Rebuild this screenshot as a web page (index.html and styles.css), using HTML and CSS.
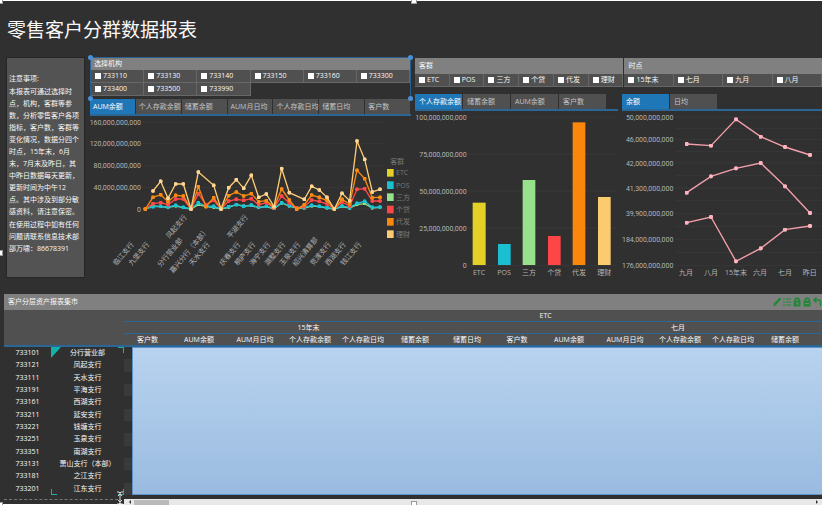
FILE: index.html
```html
<!DOCTYPE html>
<html lang="zh-CN">
<head>
    <meta charset="UTF-8">
    <meta name="viewport" content="width=device-width, initial-scale=1.0">
    <title>零售客户分群数据报表</title>
    <link rel="stylesheet" href="styles.css">
</head>
<body>
    <div class="report">
        <h1>零售客户分群数据报表</h1>

        <div class="dashboard">
            <aside class="notes">
                <p>注意事项:</p>
                <p>本报表可通过选择时<br>点，机构，客群等参<br>数，分析零售客户各项<br>指标，客户数，客群等<br>变化情况，数据分四个<br>时点，15年末，6月<br>末，7月末及昨日，其<br>中昨日数据每天更新，<br>更新时间为中午12<br>点。其中涉及到部分敏<br>感资料，请注意保密。</p>
                <p>在使用过程中如有任何<br>问题请联系信息技术部<br>邵万啸：86678391</p>
            </aside>

            <section class="branch">
                <div class="filter filter-branch">
                    <h2>选择机构</h2>
                    <div class="options options-branch">
                        <label><input type="checkbox">733110</label>
                        <label><input type="checkbox">733130</label>
                        <label><input type="checkbox">733140</label>
                        <label><input type="checkbox">733150</label>
                        <label><input type="checkbox">733160</label>
                        <label><input type="checkbox">733300</label>
                        <label><input type="checkbox">733400</label>
                        <label><input type="checkbox">733500</label>
                        <label><input type="checkbox">733990</label>
                    </div>
                    <i class="dot dot-tl"></i><i class="dot dot-tr"></i><i class="dot dot-bl"></i><i class="dot dot-br"></i>
                </div>
                <div class="tabs tabs-branch">
                    <button class="active">AUM余额</button>
                    <button>个人存款余额</button>
                    <button>储蓄余额</button>
                    <button>AUM月日均</button>
                    <button>个人存款日均</button>
                    <button>储蓄日均</button>
                    <button>客户数</button>
                </div>
                <svg class="chart" viewBox="15 18 963 522">
                    <path class="grid-line" d="M172 36H900M172 101H900M172 166H900M172 232H900M172 297H900"/>
                    <g class="axis-y">
                        <text x="168" y="44">160,000,000,000</text>
                        <text x="168" y="109">120,000,000,000</text>
                        <text x="168" y="174">80,000,000,000</text>
                        <text x="168" y="240">40,000,000,000</text>
                        <text x="168" y="305">0</text>
                    </g>
                    <g class="line green">
                        <polyline points="181,297 204,288 227,290 249,292 272,288 295,293 318,297 340,284 363,290 386,292 408,297 431,292 454,284 476,288 499,287 521,293 544,290 567,296 590,279 613,288 635,294 658,294 680,288 703,290 726,294 748,297 771,290 794,294 816,284 839,281 862,294 885,292"/>
                    </g>
                    <g class="line teal">
                        <polyline points="181,297 204,290 227,289 249,291 272,286 295,292 318,297 340,278 363,288 386,289 408,297 431,290 454,284 476,289 499,285 521,292 544,289 567,295 590,278 613,287 635,293 658,293 680,286 703,289 726,293 748,297 771,288 794,293 816,280 839,274 862,292 885,291"/>
                    </g>
                    <g class="line red">
                        <polyline points="181,297 204,281 227,278 249,284 272,267 295,267 318,297 340,251 363,284 386,271 408,297 431,273 454,268 476,271 499,266 521,284 544,278 567,294 590,258 613,279 635,294 658,290 680,270 703,274 726,282 748,297 771,276 794,288 816,238 839,236 862,273 885,273"/>
                    </g>
                    <g class="line orange">
                        <polyline points="181,297 204,262 227,254 249,275 272,256 295,258 318,297 340,230 363,290 386,263 408,297 431,257 454,246 476,258 499,251 521,275 544,272 567,292 590,237 613,270 635,298 658,284 680,255 703,262 726,272 748,297 771,268 794,282 816,181 839,206 862,263 885,262"/>
                    </g>
                    <g class="line sand">
                        <polyline points="204,243 227,214 249,265 272,222 295,222 318,297 340,186 386,226 408,297 431,233 454,209 476,235 499,196 521,262 544,252 567,290 590,176 613,248 658,268 680,229 703,240 726,262 748,297 771,250 794,272 816,93 839,148 862,246 885,238"/>
                    </g>
                    <g class="axis-branch">
                        <text transform="translate(148 404) rotate(-50)">临江支行</text>
                        <text transform="translate(194 404) rotate(-50)">九堡支行</text>
                        <text transform="translate(307 322) rotate(-50)">凤起支行</text>
                        <text transform="translate(294 392) rotate(-50)">分行营业部</text>
                        <text transform="translate(372 362) rotate(-50)">嘉兴分行（本部）</text>
                        <text transform="translate(376 404) rotate(-50)">天水支行</text>
                        <text transform="translate(490 322) rotate(-50)">平湖支行</text>
                        <text transform="translate(467 404) rotate(-50)">庆春支行</text>
                        <text transform="translate(512 404) rotate(-50)">桐庐支行</text>
                        <text transform="translate(557 404) rotate(-50)">海宁支行</text>
                        <text transform="translate(602 404) rotate(-50)">湖墅支行</text>
                        <text transform="translate(647 404) rotate(-50)">玉泉支行</text>
                        <text transform="translate(700 390) rotate(-50)">绍兴清算部</text>
                        <text transform="translate(739 404) rotate(-50)">竞渡支行</text>
                        <text transform="translate(784 404) rotate(-50)">西湖支行</text>
                        <text transform="translate(830 404) rotate(-50)">钱江支行</text>
                    </g>
                    <g class="legend">
                        <text x="916" y="162">客群</text>
                        <rect class="fill-yellow" x="906" y="177" width="20" height="23"/><text x="933" y="196">ETC</text>
                        <rect class="fill-teal" x="906" y="214" width="20" height="23"/><text x="933" y="233">POS</text>
                        <rect class="fill-green" x="906" y="250" width="20" height="23"/><text x="933" y="269">三方</text>
                        <rect class="fill-red" x="906" y="287" width="20" height="23"/><text x="933" y="306">个贷</text>
                        <rect class="fill-orange" x="906" y="324" width="20" height="23"/><text x="933" y="343">代发</text>
                        <rect class="fill-sand" x="906" y="361" width="20" height="23"/><text x="933" y="380">理财</text>
                    </g>
                </svg>
            </section>

            <section class="right">
                <div class="filters">
                    <div class="filter">
                        <h2>客群</h2>
                        <div class="options options-group">
                            <label><input type="checkbox">ETC</label>
                            <label><input type="checkbox">POS</label>
                            <label><input type="checkbox">三方</label>
                            <label><input type="checkbox">个贷</label>
                            <label><input type="checkbox">代发</label>
                            <label><input type="checkbox">理财</label>
                        </div>
                    </div>
                    <div class="filter">
                        <h2>时点</h2>
                        <div class="options options-time">
                            <label><input type="checkbox">15年末</label>
                            <label><input type="checkbox">七月</label>
                            <label><input type="checkbox">九月</label>
                            <label><input type="checkbox">八月</label>
                        </div>
                    </div>
                </div>

                <div class="charts">
                    <div>
                        <div class="tabs tabs-small">
                            <button class="active">个人存款余额</button>
                            <button>储蓄余额</button>
                            <button>AUM余额</button>
                            <button>客户数</button>
                        </div>
                        <svg class="chart" viewBox="15 18 609 522">
                            <path class="grid-line" d="M172 36H620M172 147H620M172 258H620M172 369H620M172 481H620"/>
                            <g class="axis-y">
                                <text x="170" y="44">100,000,000,000</text>
                                <text x="170" y="155">75,000,000,000</text>
                                <text x="170" y="266">50,000,000,000</text>
                                <text x="170" y="377">25,000,000,000</text>
                                <text x="170" y="489">0</text>
                            </g>
                            <rect class="fill-yellow" x="188" y="293" width="39" height="187"/>
                            <rect class="fill-teal" x="264" y="417" width="38" height="63"/>
                            <rect class="fill-green" x="338" y="225" width="38" height="255"/>
                            <rect class="fill-red" x="414" y="393" width="38" height="87"/>
                            <rect class="fill-orange" x="488" y="52" width="38" height="428"/>
                            <rect class="fill-sand" x="564" y="276" width="38" height="204"/>
                            <g class="axis-x">
                                <text x="207" y="509">ETC</text>
                                <text x="282" y="509">POS</text>
                                <text x="357" y="509">三方</text>
                                <text x="433" y="509">个贷</text>
                                <text x="507" y="509">代发</text>
                                <text x="583" y="509">理财</text>
                            </g>
                        </svg>
                    </div>
                    <div>
                        <div class="tabs tabs-small">
                            <button class="active">余额</button>
                            <button>日均</button>
                        </div>
                        <svg class="chart" viewBox="21 18 600 522">
                            <path class="grid-line" d="M180 36H621M180 70H621M180 104H621M180 139H621M180 174H621M180 212H621M180 249H621M180 287H621M180 325H621M180 364H621M180 404H621M180 443H621M180 481H621"/>
                            <g class="axis-y">
                                <text x="175" y="44">50,000,000,000</text>
                                <text x="175" y="112">46,000,000,000</text>
                                <text x="175" y="182">42,000,000,000</text>
                                <text x="175" y="257">41,300,000,000</text>
                                <text x="175" y="333">39,900,000,000</text>
                                <text x="175" y="412">184,000,000,000</text>
                                <text x="175" y="489">176,000,000,000</text>
                            </g>
                            <g class="line pink">
                                <polyline points="215,117 288,122 363,43 437,95 510,126 585,150"/>
                                <polyline points="215,263 288,214 363,190 437,174 510,244 585,324"/>
                                <polyline points="215,353 288,336 363,469 437,430 510,374 585,363"/>
                            </g>
                            <g class="axis-x">
                                <text x="213" y="509">九月</text>
                                <text x="288" y="509">八月</text>
                                <text x="363" y="509">15年末</text>
                                <text x="435" y="509">六月</text>
                                <text x="510" y="509">七月</text>
                                <text x="584" y="509">昨日</text>
                            </g>
                        </svg>
                    </div>
                </div>
            </section>
        </div>

        <section class="market">
            <div class="market-bar">
                <h2>客户分层资产报表集市</h2>
                <svg class="tools" width="50" height="12" viewBox="0 0 50 12">
                    <path d="M1 10.5l1-3L7.5 1.500l2 1.500L4 9z" fill="#218838"/>
                    <path d="M11 3h2m1 0h5M11 6h2m1 0h5M11 9h2m1 0h5" stroke="#218838"/>
                    <path d="M21.500 10.500v-6h1v-2l1-1h3l1.500 1.500v1.500h.5v6z" fill="#218838"/>
                    <path d="M23.500 4h3M24 7h2v2" stroke="#808080" fill="none"/>
                    <path d="M31.500 10.500v-6h1v-2l1-1h3l1.500 1.500v1.500h.5v6z" fill="#218838"/>
                    <path d="M33.500 4h3M33 7.500h4" stroke="#808080" fill="none"/>
                    <path d="M42 4h5q1.500 0 1.500 2v4M44.500 1.500L42 4l2.500 2.500" stroke="#218838" stroke-width="1.500" fill="none"/>
                </svg>
            </div>
            <div class="table-wrap">
                <table>
                    <colgroup>
                        <col class="w-code"><col class="w-name"><col class="w-mark"><col class="w-count">
                        <col class="w-aum"><col class="w-aum"><col class="w-deposit"><col class="w-save"><col class="w-save"><col class="w-save">
                        <col class="w-count2"><col class="w-aum"><col class="w-aum"><col class="w-deposit"><col class="w-save"><col class="w-save"><col class="w-save">
                        <col class="w-rest">
                    </colgroup>
                    <thead>
                        <tr><td colspan="2" rowspan="3"></td><th class="rule" colspan="16">ETC</th></tr>
                        <tr><th class="rule" colspan="8">15年末</th><th class="rule" colspan="7">七月</th><th class="rule"></th></tr>
                        <tr>
                            <th colspan="2">客户数</th><th>AUM余额</th><th>AUM月日均</th><th>个人存款余额</th><th>个人存款日均</th><th>储蓄余额</th><th>储蓄日均</th>
                            <th>客户数</th><th>AUM余额</th><th>AUM月日均</th><th>个人存款余额</th><th>个人存款日均</th><th>储蓄余额</th><th></th><th></th>
                        </tr>
                    </thead>
                    <tbody>
                        <tr><td>733101</td><td class="name first">分行营业部</td><td class="mark"></td><td class="selection" colspan="15" rowspan="12"></td></tr>
                        <tr><td>733121</td><td>凤起支行</td><td class="mark"></td></tr>
                        <tr><td>733111</td><td>天水支行</td><td class="mark"></td></tr>
                        <tr><td>733191</td><td>平海支行</td><td class="mark"></td></tr>
                        <tr><td>733161</td><td>西湖支行</td><td class="mark"></td></tr>
                        <tr><td>733211</td><td>延安支行</td><td class="mark"></td></tr>
                        <tr><td>733221</td><td>钱塘支行</td><td class="mark"></td></tr>
                        <tr><td>733251</td><td>玉泉支行</td><td class="mark"></td></tr>
                        <tr><td>733351</td><td>南湖支行</td><td class="mark"></td></tr>
                        <tr><td>733131</td><td>萧山支行（本部）</td><td class="mark"></td></tr>
                        <tr><td>733181</td><td>之江支行</td><td class="mark"></td></tr>
                        <tr><td>733201</td><td class="name last">江东支行</td><td class="mark"></td></tr>
                    </tbody>
                </table>
            </div>
        </section>

        <i class="handle handle-tl"></i><i class="handle handle-top"></i><i class="handle handle-left"></i>
    </div>

    <div class="footer">
        <div class="dash">
            <svg class="cursor" width="8" height="14" viewBox="0 0 8 14">
                <path d="M1 1h2l1 1 1-1h2M4 2v10M1 13h2l1-1 1 1h2M2 5l2-2 2 2M2 9l2 2 2-2" stroke="#ddd" fill="none"/>
            </svg>
        </div>
        <div class="scroll"><span class="arrow-left"></span><span class="thumb"></span><span class="arrow-right"></span></div>
        <i class="handle handle-bl"></i><i class="handle handle-bottom"></i>
    </div>

    <svg width="0" height="0" class="defs">
        <defs>
            <marker id="dot-green" viewBox="0 0 10 10" refX="5" refY="5" markerWidth="10" markerHeight="10" markerUnits="userSpaceOnUse"><circle cx="5" cy="5" r="5" fill="#98e18c"/></marker>
            <marker id="dot-teal" viewBox="0 0 10 10" refX="5" refY="5" markerWidth="12" markerHeight="12" markerUnits="userSpaceOnUse"><circle cx="5" cy="5" r="5" fill="#1cc2d4"/></marker>
            <marker id="dot-red" viewBox="0 0 10 10" refX="5" refY="5" markerWidth="12" markerHeight="12" markerUnits="userSpaceOnUse"><circle cx="5" cy="5" r="5" fill="#ff4a4a"/></marker>
            <marker id="dot-orange" viewBox="0 0 10 10" refX="5" refY="5" markerWidth="12" markerHeight="12" markerUnits="userSpaceOnUse"><circle cx="5" cy="5" r="5" fill="#fb8a10"/></marker>
            <marker id="dot-sand" viewBox="0 0 10 10" refX="5" refY="5" markerWidth="12" markerHeight="12" markerUnits="userSpaceOnUse"><circle cx="5" cy="5" r="5" fill="#ffd592"/></marker>
            <marker id="dot-pink" viewBox="0 0 10 10" refX="5" refY="5" markerWidth="13" markerHeight="13" markerUnits="userSpaceOnUse"><circle cx="5" cy="5" r="5" fill="#ffb3bd"/></marker>
        </defs>
    </svg>
</body>
</html>
```
FILE: styles.css
```css
* {
    box-sizing: border-box;
}

body {
    margin: 0;
    padding-top: 1px;
    background: #fff;
    color: #f8f8f8;
    font-family: "Open Sans", "Noto Sans CJK SC", sans-serif;
    font-size: 7px;
    line-height: 12px;
    overflow: hidden;
}

h1, h2, p {
    margin: 0;
    font-weight: normal;
}

h2 {
    font-size: 7px;
}

.report {
    position: relative;
    background: #303030;
    padding-bottom: 4px;
}

h1 {
    padding: 15px 7px 13px;
    font-size: 19px;
    line-height: 28px;
}

.dashboard {
    display: flex;
    align-items: flex-start;
    padding-left: 6px;
}

.notes {
    flex: 0 0 79px;
    height: 221px;
    margin-right: 5px;
    padding: 15px 2px;
    background: #535353;
    border: 1px solid #262626;
    white-space: nowrap;
}

.notes p {
    margin-bottom: 1px;
}

.branch {
    flex: 321 1 0;
    margin-right: 4px;
    min-width: 0;
}

.right {
    flex: 407 1 0;
    min-width: 0;
}

/* filters */
.filter h2 {
    padding: 0 4px;
    background: #808080;
    line-height: 16px;
}

.filter-branch {
    position: relative;
    border: 2px solid #2b5f8e;
    border-width: 1px 1px 0 1px;
}

.filter-branch h2 {
    padding: 0 3px;
    line-height: 12px;
}

.options {
    display: grid;
}

.options-branch {
    grid-template-columns: repeat(6, 1fr);
    padding-bottom: 2px;
}

.options-group {
    grid-template-columns: repeat(6, 1fr);
}

.options-time {
    grid-template-columns: repeat(4, 1fr);
}

.options label {
    display: flex;
    align-items: center;
    gap: 2px;
    height: 13px;
    padding-left: 4px;
    background: #505050;
    border-right: 1px solid #676767;
    border-bottom: 1px solid #676767;
    white-space: nowrap;
}

.options input {
    appearance: none;
    width: 6px;
    height: 6px;
    margin: 0;
    background: #fff;
}

.filters {
    display: grid;
    grid-template-columns: 209fr 198fr;
    gap: 1px;
    padding-top: 1px;
}

.dot {
    position: absolute;
    width: 5px;
    height: 5px;
    border-radius: 50%;
    background: #4a90d9;
}

.dot-tl { left: -3px; top: -3px; }
.dot-tr { right: -3px; top: -3px; }
.dot-bl { left: -3px; bottom: -3px; }
.dot-br { right: -3px; bottom: -3px; }

/* tabs */
.tabs {
    display: flex;
    border-bottom: 2px solid #2b6796;
}

.tabs button {
    padding: 0 0 0 3px;
    border: 0;
    border-right: 1px solid #303030;
    background: #505050;
    color: #c4c4c4;
    font: inherit;
    line-height: 15px;
    text-align: left;
    white-space: nowrap;
}

.tabs button.active {
    background: #2077b8;
    color: #fff;
}

.tabs-branch {
    margin-top: 1px;
}

.tabs-branch button {
    flex: 1 1 0;
    min-width: 0;
}

.tabs-small {
    margin-top: 7px;
}

.tabs-small button {
    flex: 0 0 48px;
    padding-left: 4px;
}

.charts {
    display: grid;
    grid-template-columns: 203fr 200fr;
    gap: 4px;
}

/* charts */
.chart {
    display: block;
    width: 100%;
    height: auto;
}

.chart text {
    font-size: 21px;
    fill: #b4b4b4;
}

.axis-y text {
    text-anchor: end;
    font-family: Roboto, sans-serif;
    font-size: 21px;
}

.axis-x text {
    text-anchor: middle;
}

.axis-branch text {
    text-anchor: end;
}

.legend text {
    fill: #787878;
}

.grid-line {
    stroke: #383838;
    stroke-width: 3;
}

.line polyline {
    fill: none;
    stroke-width: 4;
}

.green polyline { stroke: #98e18c; marker: url(#dot-green); }
.teal polyline { stroke: #1cc2d4; marker: url(#dot-teal); }
.red polyline { stroke: #ff4a4a; marker: url(#dot-red); }
.orange polyline { stroke: #fb8a10; marker: url(#dot-orange); }
.sand polyline { stroke: #fccb74; marker: url(#dot-sand); }
.pink polyline { stroke: #f4a0ac; marker: url(#dot-pink); }

.fill-yellow { fill: #e3d128; }
.fill-teal { fill: #1abfd1; }
.fill-green { fill: #98e18c; }
.fill-red { fill: #ff4646; }
.fill-orange { fill: #fb860c; }
.fill-sand { fill: #fccb70; }

/* table */
.market {
    margin-top: 4px;
    padding-left: 4px;
}

.market-bar {
    display: flex;
    justify-content: space-between;
    align-items: center;
    height: 16px;
    padding-left: 4px;
    background: #808080;
}

.table-wrap {
    overflow: hidden;
}

table {
    width: 963px;
    table-layout: fixed;
    border-collapse: separate;
    border-spacing: 0;
    text-align: center;
}

.w-code { width: 47px; }
.w-name { width: 73px; }
.w-mark { width: 8px; }
.w-count { width: 39px; }
.w-count2 { width: 48px; }
.w-aum { width: 56px; }
.w-deposit { width: 54px; }
.w-save { width: 52px; }
.w-rest { width: 104px; }

th, td {
    padding: 0;
    font-weight: normal;
    line-height: 12px;
    white-space: nowrap;
}

thead {
    background: #505050;
}

thead th {
    line-height: 11px;
}

.rule {
    border-bottom: 1px solid #2b6796;
}

thead td, thead tr:last-child th {
    border-bottom: 2px solid #2b6796;
}

tbody tr:nth-child(even) .mark {
    background: #3a3a3a;
}

.selection {
    height: 148px;
    border: 1px solid #5d93c9;
    background: linear-gradient(#b8d3ef, #9abbe0);
}

.name {
    position: relative;
}

.name::before, .name::after {
    content: '';
    position: absolute;
    width: 5px;
    height: 5px;
    border: 0 solid #1fae9f;
}

.first::before {
    left: 0;
    top: 0;
    width: 10px;
    height: 11px;
    background: #14b1ab;
    clip-path: polygon(0 0, 100% 0, 0 100%);
}

.first::after {
    right: 0;
    top: 0;
    border-width: 1px 1px 0 0;
}

.last::before {
    left: 0;
    bottom: 0;
    border-width: 0 0 1px 1px;
}

.last::after {
    right: 0;
    bottom: 0;
    border-width: 0 1px 1px 0;
}

/* bottom edge */
.footer {
    position: relative;
    display: flex;
    align-items: flex-start;
}

.dash {
    position: relative;
    flex: 0 0 124px;
    height: 5px;
    background: #303030;
}

.dash::before {
    content: '';
    display: block;
    margin: 0 6px 0 4px;
    border-top: 1px dashed #777;
}

.cursor {
    position: absolute;
    right: 0;
    top: -8px;
}

.scroll {
    flex: 1;
    display: flex;
    align-items: center;
    height: 6px;
    padding: 0 2px 0 3px;
    background: #e8e8e8;
}

.thumb {
    width: 35px;
    height: 5px;
    margin-left: 3px;
    background: #b9b9b9;
}

.arrow-left, .arrow-right {
    border: 2px solid transparent;
}

.arrow-left {
    border-right-color: #333;
}

.arrow-right {
    margin-left: auto;
    border-left-color: #333;
}

.handle {
    position: absolute;
    width: 6px;
    height: 6px;
    background: #fff;
    border: 1px solid #999;
}

.handle-tl { left: -3px; top: -3px; }
.handle-top { left: 50%; top: -3px; }
.handle-left { left: -3px; top: 249px; }
.handle-bl { left: -3px; top: 3px; }
.handle-bottom { left: 50%; top: 2px; }

.defs {
    position: absolute;
}
```
